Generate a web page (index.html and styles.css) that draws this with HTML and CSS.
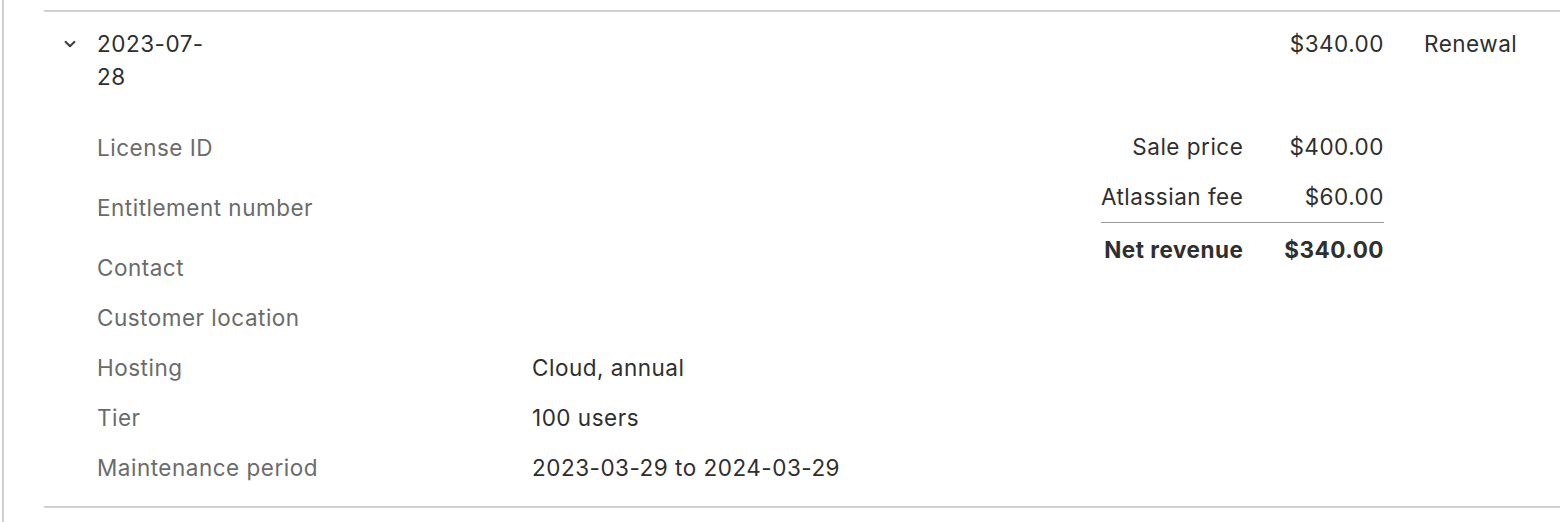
FILE: index.html
```html
<!DOCTYPE html>
<html lang="en">
<head>
<meta charset="utf-8">
<title>Transaction</title>
<link rel="stylesheet" href="styles.css">
</head>
<body>
<div class="frame">
  <div class="txn">
    <div class="txn-head">
      <div class="chev-cell">
        <svg class="chev" width="12" height="8" viewBox="0 0 12 8" aria-hidden="true">
          <path d="M1.5 1.8 L6 6.2 L10.5 1.8" fill="none" stroke="#3a3a3a" stroke-width="1.9" stroke-linecap="round" stroke-linejoin="round"/>
        </svg>
      </div>
      <div class="date-cell">2023-07-28</div>
      <div class="spacer"></div>
      <div class="amount-cell">$340.00</div>
      <div class="type-cell">Renewal</div>
    </div>
    <div class="txn-detail">
      <dl class="fields">
        <div class="field"><dt>License ID</dt><dd></dd></div>
        <div class="field field-tall"><dt>Entitlement number</dt><dd></dd></div>
        <div class="field"><dt>Contact</dt><dd></dd></div>
        <div class="field"><dt>Customer location</dt><dd></dd></div>
        <div class="field"><dt>Hosting</dt><dd>Cloud, annual</dd></div>
        <div class="field"><dt>Tier</dt><dd>100 users</dd></div>
        <div class="field"><dt>Maintenance period</dt><dd>2023-03-29 to 2024-03-29</dd></div>
      </dl>
      <div class="summary">
        <div class="sum-label">Sale price</div>
        <div class="sum-value">$400.00</div>
        <div class="sum-label">Atlassian fee</div>
        <div class="sum-value">$60.00</div>
        <div class="sum-rule"></div>
        <div class="sum-label sum-total">Net revenue</div>
        <div class="sum-value sum-total">$340.00</div>
      </div>
    </div>
  </div>
</div>
</body>
</html>
```

FILE: styles.css
```css
html, body {
  margin: 0;
  padding: 0;
  background: #ffffff;
}

body {
  font-family: Inter, "Noto Sans", "Liberation Sans", sans-serif;
  font-size: 22.5px;
  line-height: 33px;
  letter-spacing: 0.5px;
  color: #2f2f2f;
}

.frame {
  margin-left: 2px;
  border-left: 2px solid #d0d0d0;
  padding-left: 40px;
  padding-top: 10px;
  height: 512px;
}

.txn {
  border-top: 2px solid #d0d0d0;
  border-bottom: 2px solid #d0d0d0;
}

.txn-head {
  display: flex;
  align-items: flex-start;
  padding-top: 15px;
  padding-bottom: 29px;
}

.chev-cell {
  width: 53px;
  flex: none;
  display: flex;
  padding-left: 20px;
  box-sizing: border-box;
  height: 33px;
  align-items: center;
}

.chev {
  display: block;
  margin-top: 1px;
}

.date-cell {
  width: 124px;
  flex: none;
}

.spacer {
  flex: 1;
}

.amount-cell {
  text-align: right;
}

.type-cell {
  width: 136px;
  flex: none;
  padding-left: 40px;
}

.txn-detail {
  display: flex;
  align-items: flex-start;
  padding-left: 53px;
  padding-right: 176px;
  padding-bottom: 14px;
}

.fields {
  flex: 1;
  margin: 0;
}

.field {
  display: flex;
  height: 50px;
  align-items: center;
}

.field-tall {
  margin: 10px 0;
}

.field dt {
  width: 435px;
  flex: none;
  color: #6b6b6b;
}

.field dd {
  margin: 0;
}

.summary {
  display: grid;
  grid-template-columns: auto auto;
  column-gap: 41px;
}

.sum-label,
.sum-value {
  text-align: right;
  padding: 8px 0 9px;
}

.sum-rule {
  grid-column: 1 / -1;
  height: 1px;
  background: #9a9a9a;
}

.sum-total {
  font-weight: 700;
  padding-top: 10px;
}
```
